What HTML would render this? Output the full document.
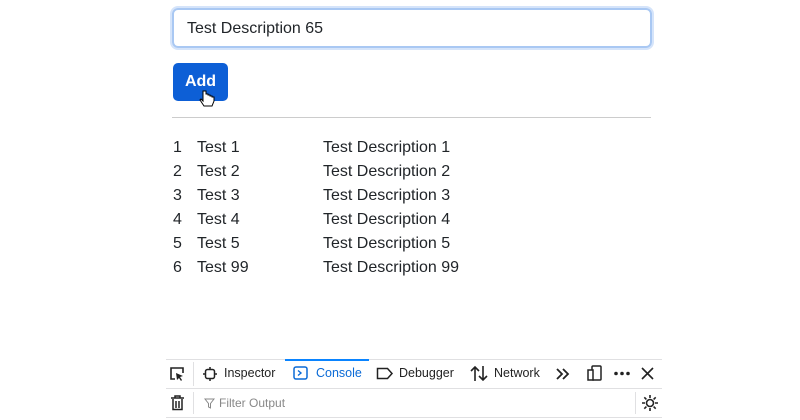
<!DOCTYPE html>
<html><head><style>
body{margin:0;width:800px;height:420px;background:#fff;font-family:"Liberation Sans",sans-serif;position:relative;overflow:hidden;color:#212529}
.a{position:absolute}
#inp{left:172px;top:8px;width:463px;height:36px;border:2px solid #a9c8f3;border-radius:6px;box-shadow:0 0 0 2px #d5e4fa;font-size:16px;line-height:38px;padding-left:13px;box-sizing:content-box}
#btn{left:173px;top:63px;width:55px;height:38px;background:#0d5fd6;border-radius:5px;color:#fff;font-size:16px;line-height:38px;text-align:center;font-weight:bold}
#hr{left:172px;top:117px;width:479px;height:1px;background:#ccc}
.r{left:173px;font-size:16px;height:24px;line-height:24px;width:400px}
.r span{position:absolute}
.dt{font-size:12.5px;color:#222}
</style></head><body>
<div class="a" id="inp">Test Description 65</div>
<div class="a" id="btn">Add</div>
<svg class="a" style="left:199px;top:89px" width="18" height="20" viewBox="0 0 18 20"><path d="M4 2v10l-2-2-1 1 4 6h8l2-5v-4h-2v-1h-2v-1h-2v-1h-2V2z" fill="#fff" stroke="#000" stroke-width="1"/></svg>
<div class="a" id="hr"></div>
<div class="a r" style="top:136px"><span style="left:0">1</span><span style="left:24px">Test 1</span><span style="left:150px">Test Description 1</span></div>
<div class="a r" style="top:160px"><span style="left:0">2</span><span style="left:24px">Test 2</span><span style="left:150px">Test Description 2</span></div>
<div class="a r" style="top:184px"><span style="left:0">3</span><span style="left:24px">Test 3</span><span style="left:150px">Test Description 3</span></div>
<div class="a r" style="top:208px"><span style="left:0">4</span><span style="left:24px">Test 4</span><span style="left:150px">Test Description 4</span></div>
<div class="a r" style="top:232px"><span style="left:0">5</span><span style="left:24px">Test 5</span><span style="left:150px">Test Description 5</span></div>
<div class="a r" style="top:256px"><span style="left:0">6</span><span style="left:24px">Test 99</span><span style="left:150px">Test Description 99</span></div>

<div class="a" style="left:166px;top:359px;width:496px;height:1px;background:#e0e0e2"></div>
<div class="a" style="left:285px;top:359px;width:84px;height:2px;background:#0a84ff"></div>
<div class="a" style="left:166px;top:388px;width:496px;height:1px;background:#e0e0e2"></div>
<div class="a" style="left:166px;top:417px;width:496px;height:1px;background:#e0e0e2"></div>
<div class="a" style="left:193px;top:362px;width:1px;height:24px;background:#e0e0e2"></div>
<div class="a" style="left:193px;top:392px;width:1px;height:22px;background:#e0e0e2"></div>
<div class="a" style="left:635px;top:392px;width:1px;height:22px;background:#e0e0e2"></div>
<svg class="a" style="left:169px;top:366px" width="16" height="16"><path d="M6 13H2V2h12v5" fill="none" stroke="#222" stroke-width="1.6"/><path d="M7 7l7 3-3 1 2 3-1 1-2-3-2 2z" fill="#222"/></svg>
<svg class="a" style="left:203px;top:367px" width="14" height="14"><rect x="2.5" y="2.5" width="9" height="9" rx="2" fill="none" stroke="#222" stroke-width="1.5"/><path d="M0 7h2M12 7h2M7 0v2M7 12v2" stroke="#222" stroke-width="1.5"/></svg>
<div class="a dt" style="left:224px;top:366px">Inspector</div>
<svg class="a" style="left:293px;top:366px" width="15" height="14"><rect x="1" y="1" width="13" height="12" rx="2" fill="none" stroke="#0a6ad6" stroke-width="1.5"/><path d="M5 4.5l3 2.5-3 2.5" fill="none" stroke="#0a6ad6" stroke-width="1.4"/></svg>
<div class="a dt" style="left:316px;top:366px;color:#0a6ad6">Console</div>
<svg class="a" style="left:376px;top:367px" width="18" height="13"><path d="M1.5 1.5h10l4.5 5-4.5 5h-10z" fill="none" stroke="#222" stroke-width="1.5"/></svg>
<div class="a dt" style="left:399px;top:366px">Debugger</div>
<svg class="a" style="left:470px;top:365px" width="18" height="17"><path d="M5 16V2M1 6l4-4 4 4M13 1v14M9 11l4 4 4-4" fill="none" stroke="#222" stroke-width="1.6"/></svg>
<div class="a dt" style="left:494px;top:366px">Network</div>
<svg class="a" style="left:555px;top:367px" width="16" height="14"><path d="M2 2l5 5-5 5M8 2l5 5-5 5" fill="none" stroke="#222" stroke-width="1.8"/></svg>
<svg class="a" style="left:587px;top:365px" width="16" height="17"><rect x="5" y="1" width="9" height="14" rx="1" fill="none" stroke="#222" stroke-width="1.5"/><rect x="1" y="5" width="5" height="10" fill="#fff" stroke="#222" stroke-width="1.5"/></svg>
<svg class="a" style="left:613px;top:371px" width="18" height="5"><circle cx="3" cy="2.5" r="1.8" fill="#222"/><circle cx="9" cy="2.5" r="1.8" fill="#222"/><circle cx="15" cy="2.5" r="1.8" fill="#222"/></svg>
<svg class="a" style="left:641px;top:367px" width="13" height="13"><path d="M1 1l11 11M12 1L1 12" stroke="#222" stroke-width="1.6"/></svg>
<svg class="a" style="left:170px;top:395px" width="15" height="16"><path d="M1 3h13M5 3V1h5v2M3 4v10.5h9V4M6 6v7M9 6v7" fill="none" stroke="#222" stroke-width="1.5"/></svg>
<svg class="a" style="left:204px;top:398px" width="11" height="11"><path d="M1 1h9L6.5 5.5V10L4.5 9V5.5z" fill="none" stroke="#888" stroke-width="1"/></svg>
<div class="a" style="left:219px;top:396px;font-size:12px;color:#888">Filter Output</div>
<svg class="a" style="left:642px;top:395px" width="16" height="16"><circle cx="8" cy="8" r="3.5" fill="none" stroke="#222" stroke-width="1.6"/><path d="M8 0v3M8 13v3M0 8h3M13 8h3M2.3 2.3l2.1 2.1M11.6 11.6l2.1 2.1M2.3 13.7l2.1-2.1M11.6 4.4l2.1-2.1" stroke="#222" stroke-width="1.6"/></svg>
</body></html>
